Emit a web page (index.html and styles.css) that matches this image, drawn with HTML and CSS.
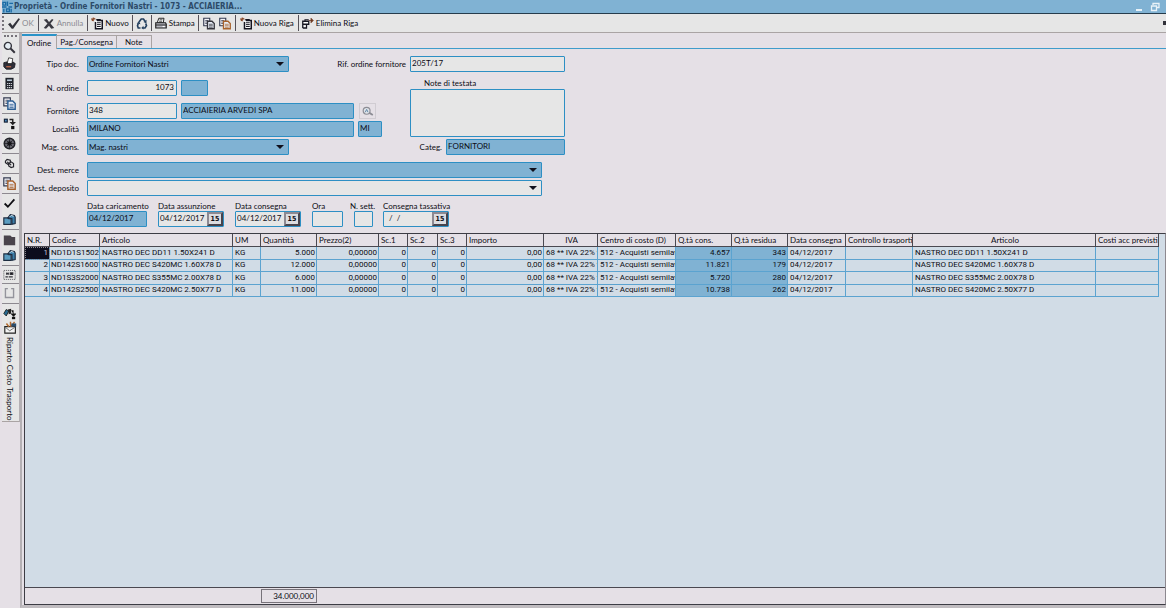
FILE: index.html
```html
<!DOCTYPE html>
<html lang="it">
<head>
<meta charset="utf-8">
<title>Proprietà - Ordine Fornitori Nastri - 1073</title>
<link rel="stylesheet" href="styles.css">
</head>
<body>
<svg class="defs" aria-hidden="true">
  <symbol id="i-new" viewBox="0 0 16 16"><path d="M0 2h6M3 0v5M1 4l4-3" stroke="#8a4a2a" stroke-width="1.500"/><path d="M8 4h7v11H6V6" fill="#fff" stroke="#151520" stroke-width="2"/><path d="M7 2h6v2H7z" fill="#151520"/><path d="M8 7h5M8 9.500h5M8 12h5" stroke="#151520" stroke-width="1.300"/></symbol>
  <symbol id="i-copy" viewBox="0 0 16 16"><path d="M1 1h8v10H1z" fill="#f4f4f8" stroke="#333a50" stroke-width="1.500"/><path d="M3 4h4M3 6h4M3 8h3" stroke="#333a50"/><path d="M6 5h6l3 3v7H6z" fill="#e8eef8" stroke="currentColor" stroke-width="1.800"/><path d="M8 9h5M8 11h5M8 13h5" stroke="currentColor"/></symbol>
  <symbol id="i-lens" viewBox="0 0 16 16"><circle cx="6" cy="6" r="4.300" fill="#e4ecf2" stroke="currentColor" stroke-width="1.700"/><path d="M9 9l5.500 5.500" stroke="currentColor" stroke-width="2.400"/></symbol>
  <symbol id="i-find" viewBox="0 0 16 16"><circle cx="6" cy="7" r="5" fill="#dfe3e8" stroke="currentColor" stroke-width="1.700"/><path d="M4 9l2-4 2 4" fill="none" stroke="#5f86a8" stroke-width="1.400"/><path d="M10 10l5 3" stroke="currentColor" stroke-width="2.600"/></symbol>
  <symbol id="i-print" viewBox="0 0 16 16"><path d="M5 1h7l-1 6H3z" fill="#fff" stroke="#222" stroke-width="1.300"/><path d="M6 3h4M5.500 5h4" stroke="#222"/><path d="M1 7h13l1 2v5H1z" fill="#b8b8c0" stroke="#222" stroke-width="1.500"/><path d="M1 10h14" stroke="#222" stroke-width="1.300"/><path d="M10 12h3" stroke="#fff" stroke-width="1.500"/></symbol>
  <symbol id="i-folder" viewBox="0 0 16 16"><path d="M1 6h5l1 1h3v7H1z" fill="currentColor" stroke="#1d2c40" stroke-width="1.400"/><path d="M6 6l3-4 5 1 1 2v8l-4 1V7z" fill="#3c7ea8" stroke="#1d2c40" stroke-width="1.400"/><path d="M8 5l2-2 3 1" fill="none" stroke="#d4e6f0" stroke-width="1.200"/></symbol>
</svg>

<header class="titlebar">
  <svg class="app-icon" viewBox="0 0 12 12"><path d="M1 1h3v3H1zM6 0v5M8 2h4M0 6h5M7 6h4M2 8v4M5 8h3v3H5zM10 8v4" fill="none" stroke="#1b6aa5" stroke-width="1.500"/></svg>
  <h1 class="title">Proprietà - Ordine Fornitori Nastri - 1073 - ACCIAIERIA...</h1>
  <button class="win-btn" aria-label="Riduci"><svg viewBox="0 0 10 10"><path d="M2 8h6" stroke="#e8f2f8" stroke-width="2"/></svg></button>
  <button class="win-btn" aria-label="Ripristina"><svg viewBox="0 0 10 10"><path d="M3 3V1.500h6v4H7M1.500 4h5v4.500h-5z" fill="none" stroke="#e8f2f8" stroke-width="1.300"/></svg></button>
</header>

<nav class="toolbar">
  <span class="grip"></span>
  <button class="tool tool-off tool-wide"><svg viewBox="0 0 16 16"><path d="M0 9l3-2 3 4 8-10 2 1L7 15H5z" fill="#33333b"/></svg>OK</button>
  <button class="tool tool-off tool-wide"><svg viewBox="0 0 16 16"><path d="M1 3l4-1 3 4 4-4 2 1-4 5 5 6-4 1-3-4-4 4-3-1 5-6z" fill="#3a3a42"/></svg>Annulla</button>
  <button class="tool"><svg><use href="#i-new"/></svg>Nuovo</button>
  <button class="tool" aria-label="Aggiorna"><svg viewBox="0 0 16 16"><path d="M4 6l3-4h3l2 3M13 8l1 3-2 3H9M6 14H3l-1-3 1-3" fill="none" stroke="#24405f" stroke-width="2.200"/><path d="M10 6l4-3v5zM10 11v5l-3-2zM1 8l3-3 2 4z" fill="#24405f"/></svg></button>
  <button class="tool"><svg><use href="#i-print"/></svg>Stampa</button>
  <div class="tool-pair">
    <button class="tool tool-bare ink-dark" aria-label="Copia"><svg><use href="#i-copy"/></svg></button>
    <button class="tool tool-bare ink-orange" aria-label="Incolla"><svg><use href="#i-copy"/></svg></button>
  </div>
  <button class="tool tool-wide"><svg><use href="#i-new"/></svg>Nuova Riga</button>
  <button class="tool tool-last"><svg viewBox="0 0 16 16"><path d="M1 5h8v4H1zM1 14V7M1 14h5V9" fill="#fff" stroke="#151520" stroke-width="1.700"/><path d="M4 5V3h5" fill="none" stroke="#151520" stroke-width="1.500"/><path d="M9 4h4M12 1l3 3-3 3z" stroke="#6d3a20" fill="#6d3a20"/></svg>Elimina Riga</button>
  <button class="more" aria-label="Altro"></button>
</nav>

<div class="workspace">
  <aside class="sidebar">
    <span class="side-grip"></span>
    <div class="side-group side-first">
      <button class="side-btn ink-dark" aria-label="Cerca"><svg><use href="#i-lens"/></svg></button>
      <button class="side-btn" aria-label="Stampa"><svg viewBox="0 0 16 16"><path d="M7 1l5 1-1 6H5z" fill="#fff" stroke="#222"/><path d="M1 7l4-1v3h6l1-3 3 2-1 5-4 2H4l-3-3z" fill="#30303a" stroke="#16161c"/><path d="M4 12h6" stroke="#c96b4a" stroke-width="1.500"/></svg></button>
    </div>
    <div class="side-group"><button class="side-btn" aria-label="Calcolatrice"><svg viewBox="0 0 16 16"><path d="M3 1h10v14H3z" fill="#20242c"/><path d="M5 3h6v2H5z" fill="#b8cad8"/><path d="M5 8h6M5 10.500h6M5 13h6" stroke="#d0d4da" stroke-width="1.400" stroke-dasharray="1.500 .8"/></svg></button></div>
    <div class="side-group"><button class="side-btn ink-blue" aria-label="Duplica"><svg><use href="#i-copy"/></svg></button></div>
    <div class="side-group"><button class="side-btn" aria-label="Flusso"><svg viewBox="0 0 16 16"><path d="M1 2h5v5H1z" fill="#16233a"/><path d="M2.500 3.500h2v2h-2z" fill="#4d8dc0"/><path d="M8 3h4v5" fill="none" stroke="#222" stroke-width="1.800"/><path d="M8 6h8l-4 4z" fill="#222"/><path d="M10 11h4v4h-4z" fill="#111"/></svg></button></div>
    <div class="side-group"><button class="side-btn" aria-label="Impostazioni"><svg viewBox="0 0 16 16"><circle cx="8" cy="8" r="6.500" fill="#686870" stroke="#222228" stroke-width="1.800"/><path d="M8 2v12M2 8h12M4 4l8 8M12 4l-8 8" stroke="#222228"/><circle cx="8" cy="8" r="2.800" fill="#151519"/></svg></button></div>
    <div class="side-group"><button class="side-btn" aria-label="Collega"><svg viewBox="0 0 16 16"><path d="M3 5l2-2 4 1v3L6 9 3 7zM7 8l3-2 3 2v4l-3 1-3-2z" fill="#ddd" stroke="#25252c" stroke-width="1.400"/><path d="M5 6l5 4" stroke="#25252c" stroke-width="1.500"/></svg></button></div>
    <div class="side-group"><button class="side-btn ink-orange" aria-label="Incolla"><svg><use href="#i-copy"/></svg></button></div>
    <div class="side-group">
      <button class="side-btn" aria-label="Conferma"><svg viewBox="0 0 16 16"><path d="M2 8l4 4 8-9" fill="none" stroke="#101014" stroke-width="2.200"/></svg></button>
      <button class="side-btn ink-sky" aria-label="Allegati"><svg><use href="#i-folder"/></svg></button>
    </div>
    <div class="side-group">
      <button class="side-btn" aria-label="Cartella"><svg viewBox="0 0 16 16"><path d="M1 3h8l2 2h4v10H1z" fill="#4a444c"/></svg></button>
      <button class="side-btn ink-sky" aria-label="Apri"><svg><use href="#i-folder"/></svg></button>
    </div>
    <div class="side-group side-tight"><button class="side-btn" aria-label="Seleziona"><svg viewBox="0 0 16 16"><path d="M1 3h14v11H1z" fill="none" stroke="#55555c" stroke-dasharray="1.500 1"/><path d="M4 6l3 2M7 6L4 8M9 6h3v2H9zM3 11h3M7 11h5" stroke="#33333a" stroke-width="1.500"/></svg></button></div>
    <div class="side-group"><button class="side-btn" aria-label="Documento"><svg viewBox="0 0 16 16"><path d="M6 2H3v11h10V2h-3" fill="none" stroke="#94949c" stroke-width="1.700"/></svg></button></div>
    <div class="side-group side-last">
      <button class="side-btn" aria-label="Esporta"><svg viewBox="0 0 16 16"><path d="M1 8l3-5 3 2-3 6z" fill="#276a92" stroke="#111"/><path d="M6 3l4-1v6l-3 1z" fill="#222"/><path d="M10 4h3v5M9 8h8l-4 4z" fill="#111"/><path d="M11 12h4v3h-4z" fill="#111"/></svg></button>
      <button class="side-btn side-text"><svg viewBox="0 0 16 16"><path d="M1 7h13v8H1z" fill="#f4f4f4" stroke="#222" stroke-width="1.400"/><path d="M2 8l5 4 6-4" fill="none" stroke="#555"/><path d="M3 3l3 4M8 1v6M13 1l-4 6" stroke="#b36a2e" stroke-width="1.800"/><path d="M9 3h6v4H9z" fill="#2b4d6b"/></svg><span class="vertical">Riparto Costo Trasporto</span></button>
    </div>
  </aside>

  <main class="page">
    <div class="tabs" role="tablist">
      <button class="tab tab-on" role="tab" aria-selected="true">Ordine</button>
      <button class="tab" role="tab" aria-selected="false">Pag./Consegna</button>
      <button class="tab tab-note" role="tab" aria-selected="false">Note</button>
    </div>

    <form class="form">
      <div class="upper">
        <div class="col-left">
          <div class="row">
            <label class="lbl" for="tipo">Tipo doc.</label>
            <span class="select w-combo"><select class="field blue" id="tipo"><option>Ordine Fornitori Nastri</option></select></span>
          </div>
          <div class="row gap-xl">
            <label class="lbl" for="numero">N. ordine</label>
            <input class="field w-code num" id="numero" value="1073">
            <input class="field blue w-mini" aria-label="Serie">
          </div>
          <div class="row gap-l">
            <label class="lbl" for="forn">Fornitore</label>
            <input class="field w-code" id="forn" value="348">
            <input class="field blue fill" aria-label="Ragione sociale" value="ACCIAIERIA ARVEDI SPA" readonly>
            <button type="button" class="find ink-gray" aria-label="Cerca fornitore"><svg><use href="#i-find"/></svg></button>
          </div>
          <div class="row gap-s">
            <label class="lbl" for="loc">Località</label>
            <input class="field blue fill" id="loc" value="MILANO" readonly>
            <input class="field blue w-prov" aria-label="Provincia" value="MI" readonly>
          </div>
          <div class="row gap-s">
            <label class="lbl" for="mag">Mag. cons.</label>
            <span class="select w-combo"><select class="field blue" id="mag"><option>Mag. nastri</option></select></span>
          </div>
        </div>
        <div class="col-right">
          <div class="row">
            <label for="rif">Rif. ordine fornitore</label>
            <input class="field w-ref" id="rif" value="205T/17">
          </div>
          <div class="notes">
            <label class="notes-lbl" for="note">Note di testata</label>
            <textarea class="field notes-box" id="note"></textarea>
          </div>
          <div class="row gap-s">
            <label for="cat">Categ.</label>
            <input class="field blue w-cat" id="cat" value="FORNITORI" readonly>
          </div>
        </div>
      </div>
      <div class="row gap-l">
        <label class="lbl" for="dm">Dest. merce</label>
        <span class="select w-dest"><select class="field blue" id="dm"><option></option></select></span>
      </div>
      <div class="row gap-s">
        <label class="lbl" for="dd">Dest. deposito</label>
        <span class="select w-dest"><select class="field" id="dd"><option></option></select></span>
      </div>
      <div class="dates">
        <div class="stack st-load"><label for="d1">Data caricamento</label><input class="field blue w-date" id="d1" value="04/12/2017" readonly></div>
        <div class="stack st-date"><label for="d2">Data assunzione</label><span class="picker field"><input id="d2" value="04/12/2017"><button type="button" class="cal">15</button></span></div>
        <div class="stack st-date"><label for="d3">Data consegna</label><span class="picker field"><input id="d3" value="04/12/2017"><button type="button" class="cal">15</button></span></div>
        <div class="stack st-hour"><label for="ora">Ora</label><input class="field w-hour" id="ora"></div>
        <div class="stack st-week"><label for="sett">N. sett.</label><input class="field w-week" id="sett"></div>
        <div class="stack"><label for="d4">Consegna tassativa</label><span class="picker field"><input id="d4" value="  /  /"><button type="button" class="cal">15</button></span></div>
      </div>
    </form>

    <section class="grid">
      <div class="grid-body">
        <table class="rows">
          <colgroup><col class="c25"><col class="c50"><col class="c133"><col class="c28"><col class="c56"><col class="c62"><col class="c29"><col class="c30"><col class="c29"><col class="c77"><col class="c54"><col class="c78"><col class="c56"><col class="c56"><col class="c58"><col class="c67"><col class="c183"><col class="c63"></colgroup>
          <thead><tr><th>N.R.</th><th>Codice</th><th>Articolo</th><th>UM</th><th>Quantità</th><th>Prezzo(2)</th><th>Sc.1</th><th>Sc.2</th><th>Sc.3</th><th>Importo</th><th class="mid">IVA</th><th>Centro di costo (D)</th><th>Q.tà cons.</th><th>Q.tà residua</th><th>Data consegna</th><th>Controllo trasporti</th><th class="mid">Articolo</th><th>Costi acc previsti</th></tr></thead>
          <tbody>
            <tr><td class="num picked">1</td><td>ND1D1S1502</td><td>NASTRO DEC DD11 1.50X241 D</td><td>KG</td><td class="num">5.000</td><td class="num">0,00000</td><td class="num">0</td><td class="num">0</td><td class="num">0</td><td class="num">0,00</td><td>68 ** IVA 22% *</td><td>512 - Acquisti semilavorati</td><td class="num hot">4.657</td><td class="num hot">343</td><td>04/12/2017</td><td></td><td>NASTRO DEC DD11 1.50X241 D</td><td></td></tr>
            <tr><td class="num">2</td><td>ND142S1600T</td><td>NASTRO DEC S420MC 1.60X78 D</td><td>KG</td><td class="num">12.000</td><td class="num">0,00000</td><td class="num">0</td><td class="num">0</td><td class="num">0</td><td class="num">0,00</td><td>68 ** IVA 22% *</td><td>512 - Acquisti semilavorati</td><td class="num hot">11.821</td><td class="num hot">179</td><td>04/12/2017</td><td></td><td>NASTRO DEC S420MC 1.60X78 D</td><td></td></tr>
            <tr><td class="num">3</td><td>ND1S3S2000T</td><td>NASTRO DEC S355MC 2.00X78 D</td><td>KG</td><td class="num">6.000</td><td class="num">0,00000</td><td class="num">0</td><td class="num">0</td><td class="num">0</td><td class="num">0,00</td><td>68 ** IVA 22% *</td><td>512 - Acquisti semilavorati</td><td class="num hot">5.720</td><td class="num hot">280</td><td>04/12/2017</td><td></td><td>NASTRO DEC S355MC 2.00X78 D</td><td></td></tr>
            <tr><td class="num">4</td><td>ND142S2500T</td><td>NASTRO DEC S420MC 2.50X77 D</td><td>KG</td><td class="num">11.000</td><td class="num">0,00000</td><td class="num">0</td><td class="num">0</td><td class="num">0</td><td class="num">0,00</td><td>68 ** IVA 22% *</td><td>512 - Acquisti semilavorati</td><td class="num hot">10.738</td><td class="num hot">262</td><td>04/12/2017</td><td></td><td>NASTRO DEC S420MC 2.50X77 D</td><td></td></tr>
          </tbody>
        </table>
      </div>
      <footer class="grid-foot"><output class="total">34.000,000</output></footer>
    </section>
  </main>
</div>
</body>
</html>
```
FILE: styles.css
```css
* { box-sizing: border-box; }
body, button, input, select, textarea, table {
  font-family: Lato, "Open Sans", sans-serif;
  font-size: 8px;
  line-height: 10px;
  color: #0c0c14;
}
body {
  margin: 0;
  height: 100vh;
  padding-left: 2px;
  display: flex;
  flex-direction: column;
  overflow: hidden;
  background: #e5e0e6;
}
button { padding: 0; border: 0; background: none; white-space: nowrap; }
svg { display: block; flex: none; }
.defs { position: absolute; width: 0; height: 0; }
.ink-dark { color: #34343c; }
.ink-blue { color: #2c5f94; }
.ink-orange { color: #a8622c; }
.ink-sky { color: #5a9cc0; }
.ink-gray { color: #8c8c94; }

.titlebar {
  display: flex;
  align-items: center;
  gap: 6px;
  flex: none;
  height: 14px;
  padding-right: 6px;
  background: #80b2d3;
  border-bottom: 1px solid #263c4c;
}
.app-icon { width: 11px; height: 12px; margin-right: -5px; }
.title { flex: 1; margin: 0; font-size: 8px; line-height: 12px; font-weight: 700; font-family: "DejaVu Sans Condensed", "Open Sans", sans-serif; color: #2c4a68; }
.win-btn svg { width: 10px; height: 10px; }

.toolbar {
  display: flex;
  align-items: center;
  flex: none;
  height: 19px;
  background: #e6e6e6;
  border-bottom: 1px solid #aaa4a4;
}
.grip { width: 2px; height: 14px; border-left: 2px dotted #77737a; }
.tool, .tool-pair {
  display: flex;
  align-items: center;
  gap: 2px;
  height: 16px;
  padding: 0 3px;
  border-right: 1px solid #55525a;
}
.tool svg { width: 12px; height: 13px; }
.tool-pair { gap: 4px; padding: 0 4px; }
.tool-off { color: #8b8b92; }
.tool-wide { padding: 0 4px; }
.tool-bare { padding: 0; border: 0; }
.tool-last { border: 0; }
.more { width: 3px; height: 4px; margin-left: auto; background: #33333b; }

.workspace { flex: 1; display: flex; min-height: 0; }
.sidebar {
  align-self: flex-start;
  flex: none;
  width: 18px;
  padding-top: 2px;
  background: #e6e6e6;
  border-right: 1px solid #b4b0b4;
  border-bottom: 1px solid #aaa4a4;
}
.side-grip { display: block; height: 2px; margin: 0 2px 1px; border-top: 2px dotted #77737a; }
.side-group { display: flex; flex-direction: column; padding: 1px 0 2px 1px; border-bottom: 1px solid #8d8990; }
.side-tight { padding: 0 0 1px 1px; }
.side-last { border: 0; padding-bottom: 0; }
.side-btn { width: 14px; height: 16px; display: flex; align-items: center; }
.side-btn svg { width: 13px; height: 13px; }
.side-text { flex-direction: column; height: auto; gap: 3px; }
.vertical { writing-mode: vertical-rl; line-height: 12px; }

.page { flex: 1; min-width: 0; display: flex; flex-direction: column; border-left: 2px solid #b4b0b4; border-bottom: 3px solid #c0bcc0; }
.tabs { display: flex; align-items: flex-end; flex: none; height: 16px; border-bottom: 1px solid #3f9ccb; }
.tab { height: 13px; padding: 0 3px; border: 1px solid #aaa4a4; border-width: 1px 1px 0 0; }
.tab-on { height: 15px; padding: 0 5px; margin-bottom: -1px; border-top: 2px solid #2a93c8; background: #e5e0e6; position: relative; }
.tab-note { padding: 0 8px; }

.form { flex: none; padding: 7px 0 6px 2px; }
.upper { display: flex; gap: 4px; }
.col-left { width: 358px; flex: none; }
.row { display: flex; align-items: center; gap: 4px; height: 16px; }
.gap-s { margin-top: 2px; }
.gap-l { margin-top: 7px; }
.gap-xl { margin-top: 8px; }
.lbl { flex: none; width: 55px; margin-right: 4px; text-align: right; white-space: nowrap; }
.field {
  display: block;
  width: 100%;
  height: 16px;
  margin: 0;
  padding: 0 2px 2px 1px;
  background: #e6e6e6;
  border: 1px solid #2d8fc4;
  border-radius: 1px;
  outline: 0;
  appearance: none;
}
select.field { padding-bottom: 0; }
.blue { background: #80b2d3; }
.num { text-align: right; }
.fill { flex: 1; min-width: 0; }
.w-code { width: 90px; }
.w-mini { width: 27px; }
.w-prov { width: 24px; }
.w-ref { width: 155px; }
.w-cat { width: 119px; }
.w-date { width: 60px; }
.w-hour { width: 31px; }
.w-week { width: 19px; }
.select { position: relative; display: block; }
.select::after {
  content: "";
  position: absolute;
  right: 5px;
  top: 6px;
  border: 4px solid transparent;
  border-top-color: #10101c;
  border-bottom: 0;
  pointer-events: none;
}
.w-combo { width: 202px; }
.w-dest { width: 455px; }
.find { width: 17px; height: 16px; margin: 0 6px 0 1px; border: 1px solid #d0ccd2; display: grid; place-items: center; }
.find svg { width: 12px; height: 11px; }
.col-right { display: flex; flex-direction: column; align-items: flex-end; width: 179px; }
.col-right label { white-space: nowrap; }
.notes { width: 155px; margin-top: 5px; }
.notes-lbl { display: block; padding-left: 14px; line-height: 12px; }
.notes-box { height: 48px; resize: none; }
.dates { display: flex; margin: 5px 0 0 63px; }
.stack { display: flex; flex-direction: column; white-space: nowrap; }
.st-load { width: 71px; }
.st-date { width: 77px; }
.st-hour { width: 38px; }
.st-week { width: 33px; }
.st-week .field { margin-left: 4px; }
.picker { display: flex; align-items: center; width: 66px; padding: 0; }
.picker input { flex: 1; min-width: 0; padding: 0 0 2px 1px; border: 0; background: none; outline: 0; height: 14px; }
.cal {
  flex: none;
  width: 16px;
  height: 14px;
  font-family: "DejaVu Sans Condensed", sans-serif;
  font-weight: 700;
  font-size: 7px;
  line-height: 8px;
  background: #dcdce0;
  border: 2px solid #47434c;
  border-top-color: #8d8992;
  border-left-color: #8d8992;
}

.grid { flex: 1; min-height: 0; display: flex; flex-direction: column; margin-left: 2px; border: 1px solid #3c3c44; border-right-color: #8d8990; }
.grid-body { flex: 1; min-height: 0; overflow: hidden; background: #d1dce6; }
.rows { width: 1134px; height: 63px; table-layout: fixed; border-collapse: separate; border-spacing: 0; }
.rows th, .rows td { padding: 0 1px 0 2px; overflow: hidden; white-space: nowrap; text-align: left; font-weight: 400; }
.rows th { height: 13px; padding-right: 0; background: #e5e0e6; border-right: 1px solid #4a4850; border-bottom: 1px solid #4a4850; }
.rows td { font-family: Roboto, sans-serif; border-right: 1px solid #5ba3d0; border-bottom: 1px solid #5ba3d0; }
.rows td:nth-child(2) { padding: 0 0 0 1px; }
.rows .mid { text-align: center; }
.rows .num { text-align: right; }
.rows .hot { background: #80b2d3; }
.rows .picked { background: #0c0c1c; color: #c8c8d4; outline: 1px dotted #8d8990; outline-offset: -1px; }
.c25 { width: 25px; } .c28 { width: 28px; } .c29 { width: 29px; } .c30 { width: 30px; }
.c50 { width: 50px; } .c54 { width: 54px; } .c56 { width: 56px; } .c58 { width: 58px; }
.c62 { width: 62px; } .c63 { width: 63px; } .c67 { width: 67px; } .c77 { width: 77px; }
.c78 { width: 78px; } .c133 { width: 133px; } .c183 { width: 183px; }
.grid-foot { flex: none; padding: 1px 0 1px 236px; border-top: 1px solid #4a4850; }
.total { display: block; width: 56px; height: 14px; padding: 0 2px; line-height: 12px; text-align: right; border: 1px solid #77737a; }
```
